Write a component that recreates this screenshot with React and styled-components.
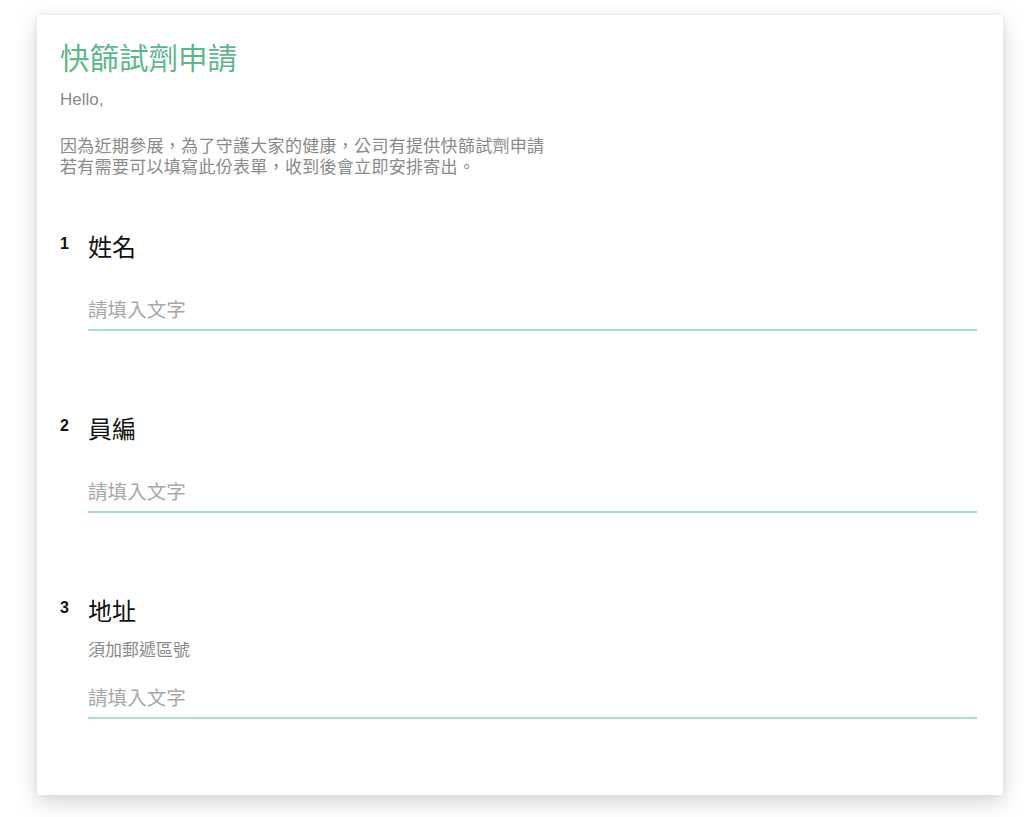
import React from "react";
import styled, { createGlobalStyle } from "styled-components";

const Global = createGlobalStyle`
  html, body { margin: 0; padding: 0; background: #ffffff; }
  body { font-family: "Liberation Sans", "Noto Sans CJK TC", sans-serif; }
  * { box-sizing: border-box; }
`;

const Page = styled.div`
  padding: 15px 21px 22px 37px;
`;

const Card = styled.form`
  width: 966px;
  height: 780px;
  background: #fff;
  box-shadow: 0 7px 20px rgba(0, 0, 0, 0.17), 0 0 6px rgba(0, 0, 0, 0.06);
  padding: 23px 26px 0 23px;
  display: flex;
  flex-direction: column;
`;

const Title = styled.h1`
  margin: 0;
  font-size: 29.5px;
  line-height: 36px;
  font-weight: 400;
  color: #5cb88a;
  font-family: "Noto Sans CJK TC", sans-serif;
`;

const Intro = styled.p`
  margin: ${(p) => p.$top}px 0 0;
  font-size: 17px;
  line-height: ${(p) => p.$lh}px;
  letter-spacing: ${(p) => p.$ls || 0}px;
  color: #8a8a8a;
  font-family: "Liberation Sans", "Noto Sans CJK TC", sans-serif;
`;

const Questions = styled.div`
  display: flex;
  flex-direction: column;
  gap: 82px;
  margin-top: 53px;
`;

const Question = styled.div`
  display: grid;
  grid-template-columns: 28px 1fr;
`;

const Num = styled.span`
  padding-top: 2px;
  font-size: 16px;
  font-weight: 700;
  line-height: 22px;
  color: #111;
  font-family: "Liberation Sans", sans-serif;
`;

const Body = styled.div`
  display: flex;
  flex-direction: column;
`;

const Label = styled.div`
  font-size: 24px;
  line-height: 30px;
  font-weight: 400;
  color: #111;
  padding-bottom: 11px;
  font-family: "Noto Sans CJK TC", sans-serif;
`;

const Desc = styled.div`
  margin-top: 3px;
  font-size: 17px;
  line-height: 20px;
  color: #8a8a8a;
  font-family: "Noto Sans CJK TC", sans-serif;
`;

const Input = styled.input`
  margin-top: ${(p) => (p.$afterDesc ? 25 : 24)}px;
  border: none;
  border-bottom: 2px solid #a6e0c6;
  outline: none;
  background: transparent;
  padding: 0 0 9px;
  font-size: 19.6px;
  line-height: 24px;
  height: 35px;
  color: #333;
  font-family: "Noto Sans CJK TC", sans-serif;
  &::placeholder { color: #a8a8a8; }
`;

const questions = [
  { n: 1, label: "姓名" },
  { n: 2, label: "員編" },
  { n: 3, label: "地址", desc: "須加郵遞區號" },
];

export default function App() {
  return (
    <>
      <Global />
      <Page>
        <Card onSubmit={(e) => e.preventDefault()}>
          <Title>快篩試劑申請</Title>
          <Intro $top={16} $lh={20}>Hello,</Intro>
          <Intro $top={26} $lh={21} $ls={0.3}>
            因為近期參展，為了守護大家的健康，公司有提供快篩試劑申請
            <br />
            若有需要可以填寫此份表單，收到後會立即安排寄出。
          </Intro>
          <Questions>
            {questions.map((q) => (
              <Question key={q.n}>
                <Num>{q.n}</Num>
                <Body>
                  <Label>{q.label}</Label>
                  {q.desc && <Desc>{q.desc}</Desc>}
                  <Input placeholder="請填入文字" $afterDesc={!!q.desc} />
                </Body>
              </Question>
            ))}
          </Questions>
        </Card>
      </Page>
    </>
  );
}
